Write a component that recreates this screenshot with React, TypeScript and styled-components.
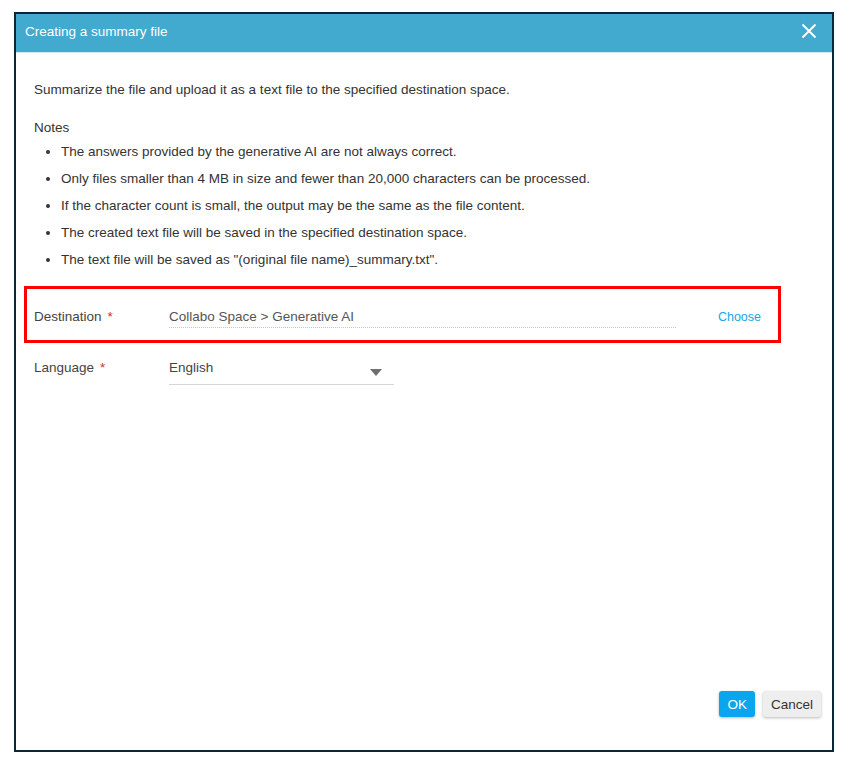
import React from "react";
import styled, { createGlobalStyle } from "styled-components";

const Global = createGlobalStyle`
  html, body { margin: 0; padding: 0; background: #ffffff; }
  body { font-family: "Liberation Sans", Arial, sans-serif; }
  * { box-sizing: border-box; }
`;

const Page = styled.div`
  padding: 12px 0 0 14px;
`;

const Dialog = styled.div`
  width: 820px;
  height: 740px;
  border: 2px solid #0b2636;
  display: flex;
  flex-direction: column;
  background: #fff;
`;

const Header = styled.div`
  height: 39px;
  background: #42a9cf;
  border-bottom: 1px solid #cfe9f3;
  display: flex;
  align-items: center;
  justify-content: space-between;
  padding: 0 14px 0 9px;
`;

const Title = styled.div`
  color: #fff;
  font-size: 13.5px;
  line-height: 20px;
  margin-top: -2px;
`;

const CloseButton = styled.button`
  border: none;
  background: transparent;
  padding: 0;
  width: 18px;
  height: 18px;
  display: flex;
  align-items: center;
  justify-content: center;
  margin-top: -4px;
  cursor: pointer;
`;

const Body = styled.div`
  flex: 1;
  padding: 27px 18px 0 18px;
  color: #333;
  font-size: 13.5px;
`;

const Paragraph = styled.div`
  line-height: 20px;
`;

const NotesTitle = styled.div`
  line-height: 20px;
  margin-top: 18px;
`;

const NoteList = styled.ul`
  margin: 0;
  padding: 0 0 0 27px;
`;

const NoteItem = styled.li`
  line-height: 27px;
  padding-left: 0;
`;

const Highlight = styled.div`
  margin: 13px 33px 0 -10px;
  border: 3px solid #ff0000;
  padding: 18px 17px 12px 7px;
`;

const FieldRow = styled.div<{ $top?: number }>`
  display: flex;
  align-items: flex-start;
  margin-top: ${(p) => p.$top ?? 0}px;
`;

const Label = styled.div`
  width: 135px;
  flex: none;
  line-height: 20px;
  color: #444;
`;

const Required = styled.span`
  color: #e0261c;
  margin-left: 6px;
`;

const PathValue = styled.div`
  flex: 1;
  line-height: 20px;
  color: #555;
  border-bottom: 1px dotted #c4c4c4;
`;

const ChooseLink = styled.a`
  color: #22a4e4;
  font-size: 12.5px;
  line-height: 20px;
  margin-left: 42px;
  cursor: pointer;
`;

const Select = styled.div`
  width: 225px;
  height: 27px;
  border-bottom: 1px solid #d6d6d6;
  display: flex;
  justify-content: space-between;
  align-items: flex-start;
  padding-right: 12px;
  color: #444;
`;

const SelectText = styled.span`
  line-height: 20px;
`;

const Caret = styled.span`
  width: 0;
  height: 0;
  border-left: 6px solid transparent;
  border-right: 6px solid transparent;
  border-top: 7px solid #6f6f6f;
  margin-top: 11px;
`;

const Footer = styled.div`
  display: flex;
  justify-content: flex-end;
  gap: 8px;
  padding: 0 11px 33px 0;
`;

const Button = styled.button<{ $primary?: boolean }>`
  height: 26px;
  padding: 0 8px;
  border: none;
  border-radius: 3px;
  font-family: "Liberation Sans", Arial, sans-serif;
  font-size: 13.5px;
  background: ${(p) => (p.$primary ? "#0aa5ec" : "#eeeeee")};
  color: ${(p) => (p.$primary ? "#ffffff" : "#333333")};
  box-shadow: 0 1px 3px rgba(0, 0, 0, 0.28);
  cursor: pointer;
`;

const notes = [
  "The answers provided by the generative AI are not always correct.",
  "Only files smaller than 4 MB in size and fewer than 20,000 characters can be processed.",
  "If the character count is small, the output may be the same as the file content.",
  "The created text file will be saved in the specified destination space.",
  'The text file will be saved as "(original file name)_summary.txt".',
];

export default function App() {
  return (
    <Page>
      <Global />
      <Dialog>
        <Header>
          <Title>Creating a summary file</Title>
          <CloseButton aria-label="Close">
            <svg width="16" height="16" viewBox="0 0 16 16">
              <path d="M1.5 1.5 L14.5 14.5 M14.5 1.5 L1.5 14.5" stroke="#fff" strokeWidth="2" strokeLinecap="butt" />
            </svg>
          </CloseButton>
        </Header>
        <Body>
          <Paragraph>
            Summarize the file and upload it as a text file to the specified destination space.
          </Paragraph>
          <NotesTitle>Notes</NotesTitle>
          <NoteList>
            {notes.map((n) => (
              <NoteItem key={n}>{n}</NoteItem>
            ))}
          </NoteList>
          <Highlight>
            <FieldRow>
              <Label>
                Destination<Required>*</Required>
              </Label>
              <PathValue>Collabo Space &gt; Generative AI</PathValue>
              <ChooseLink>Choose</ChooseLink>
            </FieldRow>
          </Highlight>
          <FieldRow $top={15}>
            <Label>
              Language<Required>*</Required>
            </Label>
            <Select>
              <SelectText>English</SelectText>
              <Caret />
            </Select>
          </FieldRow>
        </Body>
        <Footer>
          <Button $primary>OK</Button>
          <Button>Cancel</Button>
        </Footer>
      </Dialog>
    </Page>
  );
}
